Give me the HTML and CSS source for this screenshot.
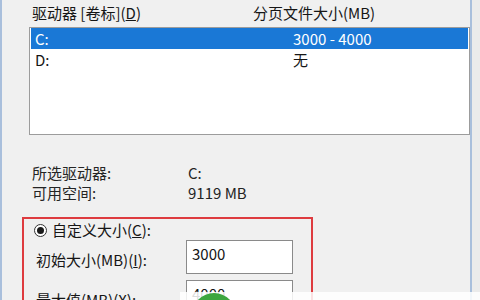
FILE: index.html
```html
<!DOCTYPE html>
<html lang="zh-CN">
<head>
  <meta charset="UTF-8">
  <title>虚拟内存</title>
  <link rel="stylesheet" href="styles.css">
</head>
<body>
  <div class="window">
    <div class="list-header">
      <span>驱动器 [卷标](<u>D</u>)</span>
      <span>分页文件大小(MB)</span>
    </div>
    <div class="drive-list">
      <div class="drive-row selected">
        <span>C:</span>
        <span>3000 - 4000</span>
      </div>
      <div class="drive-row">
        <span>D:</span>
        <span>无</span>
      </div>
    </div>

    <div class="drive-info">
      <span>所选驱动器:</span>
      <span>C:</span>
      <span>可用空间:</span>
      <span>9119 MB</span>
    </div>

    <div class="custom-size">
      <label class="radio-row">
        <span class="radio"><span class="radio-dot"></span></span>
        <span>自定义大小(<u>C</u>):</span>
      </label>
      <div class="field-row">
        <span class="field-label">初始大小(MB)(<u>I</u>):</span>
        <div class="field-box">3000</div>
      </div>
      <div class="field-row">
        <span class="field-label">最大值(MB)(<u>X</u>):</span>
        <div class="field-box">4000</div>
      </div>
    </div>
  </div>

  <div class="watermark-strip"></div>
  <div class="watermark-logo"></div>
</body>
</html>
```

FILE: styles.css
```css
body {
  margin: 0;
  background-color: #ebebeb;
  font-family: "Noto Sans CJK SC", "Noto Sans", sans-serif;
  font-size: 15px;
  color: #161616;
  width: 480px;
  height: 300px;
  overflow: hidden;
  position: relative;
}
.window {
  width: 468px;
  height: 300px;
  overflow: hidden;
  background-color: #f0f0f0;
  border-left: 2px solid #a9bfdc;
  border-right: 2px solid #a9bfdc;
}
.list-header {
  display: grid;
  grid-template-columns: 221px 1fr;
  padding: 3px 0 4px 30px;
  line-height: 20px;
}
.drive-list {
  margin-left: 27px;
  width: 437px;
  height: 106px;
  border: 1px solid #9c9c9c;
  background-color: #fff;
  padding: 0 1px;
}
.drive-row {
  display: grid;
  grid-template-columns: 258px 1fr;
  padding-left: 4px;
  height: 21px;
  line-height: 21px;
}
.drive-row.selected {
  background-color: #1a78d6;
  color: #fff;
}
.drive-info {
  display: grid;
  grid-template-columns: 156px 1fr;
  margin: 28px 0 0 30px;
  line-height: 20px;
  color: #242424;
}
.custom-size {
  margin: 14px 0 0 20px;
  width: 287px;
  height: 81px;
  overflow: hidden;
  border: 2px solid #de3b3f;
  border-bottom: none;
}
.radio-row {
  display: flex;
  align-items: center;
  gap: 5px;
  margin: 1px 0 0 10px;
  line-height: 20px;
}
.radio {
  width: 11px;
  height: 11px;
  border: 1px solid #333;
  border-radius: 50%;
  background-color: #fff;
  display: flex;
  align-items: center;
  justify-content: center;
}
.radio-dot {
  width: 7px;
  height: 7px;
  border-radius: 50%;
  background-color: #1a1a1a;
}
.field-row {
  display: flex;
  align-items: center;
  margin-bottom: 6px;
}
.field-label {
  width: 150px;
  padding-left: 12px;
  padding-top: 5px;
  line-height: 20px;
}
.field-box {
  width: 100px;
  height: 29px;
  padding: 3px 0 0 5px;
  border: 1px solid #8a8a8a;
  background-color: #fff;
  line-height: 20px;
}
.watermark-strip {
  position: absolute;
  left: 180px;
  top: 292px;
  width: 300px;
  height: 8px;
  background-color: rgba(255, 255, 255, 0.85);
}
.watermark-logo {
  position: absolute;
  left: 192px;
  top: 293px;
  width: 44px;
  height: 44px;
  border-radius: 50%;
  background-color: #3da63f;
}
```
